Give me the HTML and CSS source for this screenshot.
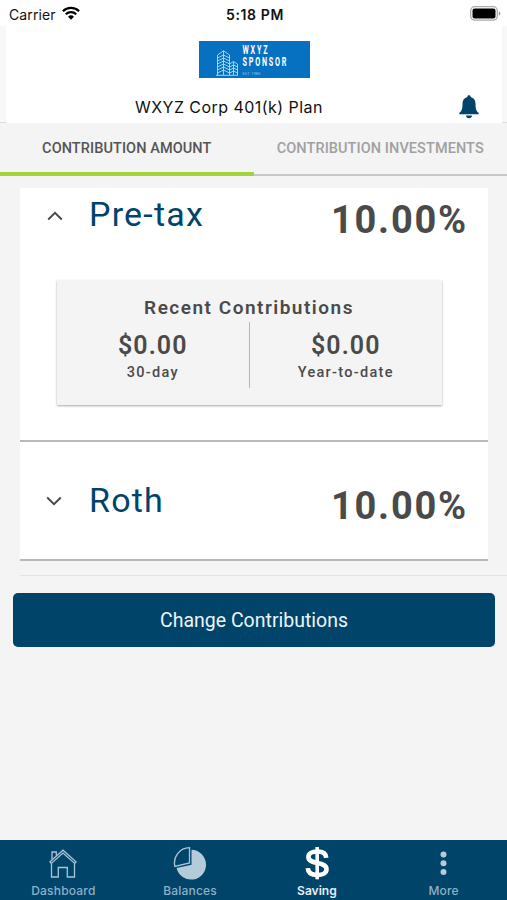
FILE: index.html
```html
<!DOCTYPE html>
<html lang="en">
<head>
  <meta charset="UTF-8" />
  <meta name="viewport" content="width=device-width, initial-scale=1.0"/>
  <title>Savings</title>
  <link rel="stylesheet" href="styles.css">
</head>
<body>
  <div class="status-bar">
    <div class="carrier">
      <span>Carrier</span>
      <svg class="wifi" width="18" height="14" viewBox="0 0 18 14" fill="none" stroke="#000" stroke-width="2.3">
        <path d="M0.9 5.2a11.5 11.5 0 0 1 16.2 0"/>
        <path d="M3.8 8.3a7.4 7.4 0 0 1 10.4 0"/>
        <path d="M9 13.8L6 10.8a4.3 4.3 0 0 1 6 0z" fill="#000" stroke="none"/>
      </svg>
    </div>
    <div class="time">5:18 PM</div>
    <svg class="battery" width="31" height="15" viewBox="0 0 31 15">
      <rect x="0.7" y="0.7" width="26.6" height="13.4" rx="4" fill="#fff" stroke="#aaa" stroke-width="1.3"/>
      <rect x="2.5" y="2.4" width="23" height="10" rx="2" fill="#000"/>
      <path d="M28.8 5.2q1.6 .7 1.6 2.2t-1.6 2.2z" fill="#999"/>
    </svg>
  </div>

  <div class="header-wrap">
    <div class="header">
      <svg class="logo" width="111" height="37" viewBox="0 0 111 37">
        <rect width="111" height="37" fill="#0671c0"/>
        <g fill="none" stroke="#b5dbf5" stroke-width="0.9">
          <path d="M18.5 34V14l6-4.2 6 4.2v20M24.5 10v24M30.500 23l4-2.500 4 2.500v11M34.500 21v13M17 34.300h22"/>
          <path d="M18.500 17l6-3 6 3M18.500 20l6-3 6 3M18.500 23l6-3 6 3M18.500 26l6-3 6 3M18.500 29l6-3 6 3M18.500 32l6-3 6 3M30.500 26l4-2 4 2M30.500 29l4-2 4 2M30.500 32l4-2 4 2"/>
        </g>
        <g class="logo-name" transform="translate(43.5 0) scale(0.6 1)">
          <text x="0" y="13.400">WXYZ</text>
          <text x="0" y="25.200">SPONSOR</text>
        </g>
        <text class="logo-est" x="43.500" y="34.200">EST. 1985</text>
      </svg>
      <div class="plan-row">
        <div class="plan">WXYZ Corp 401(k) Plan</div>
        <svg class="bell" width="20" height="24" viewBox="0 0 20 24" fill="#00446a">
          <path d="M10 0.300c1 0 1.700.7 1.700 1.600 3 .8 4.800 3.200 4.800 6.600 0 5.500.8 7.500 3.200 9.400v1.400H.3v-1.400c2.400-1.900 3.200-3.900 3.200-9.400 0-3.400 1.800-5.800 4.800-6.600C8.300 1 9 .3 10 .3z"/>
          <path d="M7 20.600h6c0 1.500-1.200 2.700-3 2.700s-3-1.200-3-2.700z"/>
        </svg>
      </div>
    </div>
  </div>

  <div class="tabs">
    <div class="tab active">CONTRIBUTION AMOUNT</div>
    <div class="tab">CONTRIBUTION INVESTMENTS</div>
  </div>

  <div class="cards">
    <div class="card pretax">
      <div class="card-row">
        <svg class="chevron" width="16" height="10" viewBox="0 0 16 10"><path d="M1.200 8.500L8 1.900l6.800 6.600"/></svg>
        <div class="name">Pre-tax</div>
        <div class="percent">10.00%</div>
      </div>
      <div class="recent">
        <div class="recent-title">Recent Contributions</div>
        <div class="amounts">
          <div class="amount">
            <div class="money">$0.00</div>
            <div class="period">30-day</div>
          </div>
          <div class="amount">
            <div class="money">$0.00</div>
            <div class="period">Year-to-date</div>
          </div>
        </div>
      </div>
    </div>
    <div class="card roth">
      <div class="card-row">
        <svg class="chevron down" width="16" height="10" viewBox="0 0 16 10"><path d="M1.200 1.500L8 8.100l6.800-6.600"/></svg>
        <div class="name">Roth</div>
        <div class="percent">10.00%</div>
      </div>
    </div>
  </div>

  <div class="divider"></div>
  <button class="change">Change Contributions</button>

  <div class="nav">
    <div class="nav-item">
      <svg width="34" height="34" viewBox="0 0 34 34" fill="none" stroke="#a9c4d6" stroke-width="1.300">
        <path d="M4 15.800L17 4.200l13 11.600-1.300 1.600L17 7 5.300 17.400z"/>
        <path d="M6 13.500V6h4.300v3.600"/>
        <path d="M5.500 17.300V31h6.800v-9.500h9V31h7.200V17.300"/>
      </svg>
      <span>Dashboard</span>
    </div>
    <div class="nav-item">
      <svg width="34" height="34" viewBox="0 0 34 34">
        <path d="M18.500 3.800A14.900 14.900 0 1 1 3.600 22L18.500 18.700z" fill="#b5cbd9"/>
        <path d="M16.500 1.600V17L1.900 20.500A15.300 15.300 0 0 1 16.500 1.600z" fill="none" stroke="#a9c4d6" stroke-width="1.300"/>
      </svg>
      <span>Balances</span>
    </div>
    <div class="nav-item selected">
      <svg width="34" height="34" viewBox="0 0 34 34" fill="none" stroke="#fff">
        <path d="M26.200 11.800C26 7.500 22.500 5.500 17.200 5.500c-5.200 0-8.800 2-8.800 5.600 0 3.700 3.600 4.800 8.800 5.900 5.400 1.100 9.300 2.200 9.300 6.200 0 3.900-3.900 5.800-9.200 5.800-5.700 0-9.300-2.200-9.500-6.800" stroke-width="4.600"/>
        <path d="M17.200 1v32.300" stroke-width="3.600"/>
      </svg>
      <span>Saving</span>
    </div>
    <div class="nav-item">
      <svg width="34" height="34" viewBox="0 0 34 34" fill="#b5cbd9">
        <circle cx="16.500" cy="8.500" r="3"/>
        <circle cx="16.500" cy="17.200" r="3"/>
        <circle cx="16.500" cy="25.900" r="3"/>
      </svg>
      <span>More</span>
    </div>
  </div>
</body>
</html>
```
FILE: styles.css
```css
* {
  box-sizing: border-box;
}

body {
  display: flex;
  flex-direction: column;
  height: 100vh;
  margin: 0;
  overflow: hidden;
  background: #f4f4f4;
  color: #4a4a4a;
  font-family: Roboto, "Liberation Sans", sans-serif;
}

svg {
  display: block;
  flex: none;
}

.status-bar {
  display: grid;
  grid-template-columns: 1fr auto 1fr;
  align-items: center;
  height: 26px;
  padding: 0 6px 0 9px;
  background: #fff;
  color: #111;
  font-family: Inter, sans-serif;
  font-size: 14px;
}

.carrier {
  display: flex;
  align-items: center;
  gap: 6px;
  padding-top: 2px;
  letter-spacing: 0.1px;
}

.wifi {
  margin-top: -3px;
}

.time {
  padding-top: 2px;
  font-weight: 600;
  letter-spacing: 0.6px;
}

.battery {
  justify-self: end;
}

.header-wrap {
  height: 97px;
  padding: 0 5px 0 6px;
  border-bottom: 1px solid #dcdcdc;
  background: #f8f8f8;
}

.header {
  height: 97px;
  padding-top: 15px;
  background: #fff;
}

.logo {
  margin-left: 193px;
}

.logo-name {
  fill: #fff;
  font-size: 12px;
  font-weight: 700;
  letter-spacing: 3px;
}

.logo-est {
  fill: #8cc4ec;
  font-size: 4px;
}

.plan-row {
  display: flex;
  align-items: center;
  justify-content: space-between;
  height: 26px;
  margin-top: 16px;
  padding: 0 23px 0 129px;
}

.plan {
  color: #111;
  font-family: Inter, sans-serif;
  font-size: 16px;
  letter-spacing: 0.45px;
  white-space: nowrap;
}

.tabs {
  display: flex;
  height: 53px;
}

.tab {
  flex: 1;
  padding-top: 16px;
  border-bottom: 2px solid #c8c8c8;
  color: #a0a0a0;
  font-size: 14.5px;
  font-weight: 500;
  letter-spacing: 0.08px;
  line-height: 19px;
  text-align: center;
  white-space: nowrap;
}

.tab.active {
  border-bottom: 4px solid #a3d53b;
  color: #555;
}

.cards {
  margin: 12px 19px 0 20px;
}

.card {
  background: #fff;
  border-bottom: 2px solid #b9b9b9;
}

.pretax {
  height: 254px;
  padding-top: 5px;
}

.roth {
  height: 119px;
  padding-top: 37px;
}

.card-row {
  display: flex;
  align-items: flex-start;
  padding: 0 20px 0 27px;
}

.chevron {
  margin: 18px 26px 0 0;
  fill: none;
  stroke: #4a4a4a;
  stroke-width: 2;
}

.chevron.down {
  margin: 17px 27px 0 -1px;
}

.name {
  color: #00446a;
  font-size: 34px;
  letter-spacing: 1.2px;
  line-height: 43px;
}

.percent {
  margin-left: auto;
  font-size: 38px;
  font-weight: 700;
  letter-spacing: 1.8px;
  line-height: 54px;
}

.recent {
  height: 125px;
  margin: 33px 46px 0 37px;
  padding-top: 16px;
  background: #f4f4f4;
  box-shadow: 0 1px 2px rgba(0, 0, 0, 0.35);
  font-weight: 500;
  text-align: center;
}

.recent-title {
  padding-right: 1px;
  font-size: 19px;
  font-weight: 600;
  letter-spacing: 1.5px;
  line-height: 24px;
}

.amounts {
  display: grid;
  grid-template-columns: 1fr 1fr;
  height: 66px;
  margin-top: 2px;
}

.amount {
  padding-top: 10px;
}

.amount:first-child {
  border-right: 1px solid #b5b5b5;
}

.money {
  font-size: 25px;
  font-weight: 600;
  letter-spacing: 1.1px;
  line-height: 28px;
}

.period {
  font-size: 14.5px;
  letter-spacing: 1.3px;
  line-height: 25px;
}

.divider {
  height: 1px;
  margin: 14px 0 0 20px;
  background: #e4e4e4;
}

.change {
  flex: none;
  height: 54px;
  margin: 17px 12px 0 13px;
  padding: 0;
  border: none;
  border-radius: 5px;
  background: #00446a;
  color: #eef4f8;
  font-family: inherit;
  font-size: 19.5px;
}

.nav {
  display: grid;
  grid-template-columns: repeat(4, 1fr);
  height: 60px;
  margin-top: auto;
  background: #00446a;
}

.nav-item {
  display: flex;
  flex-direction: column;
  align-items: center;
  padding-top: 6px;
  color: #8fb0c6;
  font-family: Inter, sans-serif;
  font-size: 12px;
  font-weight: 500;
  letter-spacing: 0.2px;
  line-height: 15px;
}

.nav-item svg {
  margin-bottom: 3px;
}

.nav-item.selected {
  color: #e6eff5;
  font-weight: 600;
  letter-spacing: 0;
}
```
